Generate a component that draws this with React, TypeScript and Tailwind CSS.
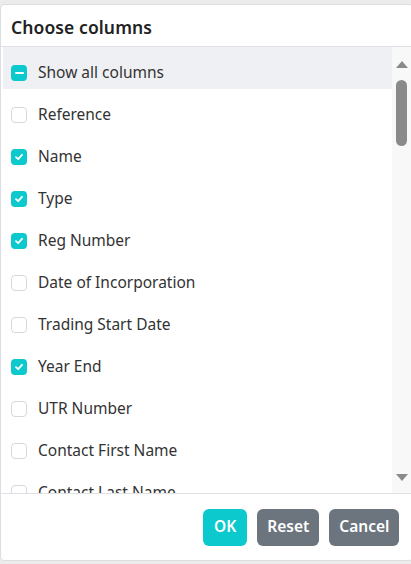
import React from "react";

const items: [string, boolean][] = [
  ["Reference", false],
  ["Name", true],
  ["Type", true],
  ["Reg Number", true],
  ["Date of Incorporation", false],
  ["Trading Start Date", false],
  ["Year End", true],
  ["UTR Number", false],
  ["Contact First Name", false],
  ["Contact Last Name", false],
];

function Box({ state }: { state: "on" | "off" | "mixed" }) {
  if (state === "off")
    return <div className="w-4 h-4 rounded-[4px] border border-[#d5d8dd] bg-white shrink-0" />;
  return (
    <div className="w-4 h-4 rounded-[4px] bg-[#0cc9cd] shrink-0 flex items-center justify-center">
      {state === "on" ? (
        <svg width="10" height="10" viewBox="0 0 10 10">
          <path d="M2 5.2 L4.2 7.2 L8 2.8" fill="none" stroke="white" strokeWidth="1.8" strokeLinecap="round" strokeLinejoin="round" />
        </svg>
      ) : (
        <div className="w-[9px] h-[2px] bg-white rounded" />
      )}
    </div>
  );
}

export default function App() {
  return (
    <div
      className="w-[411px] h-[564px] bg-[#ececec] pt-1 overflow-hidden"
      style={{ fontFamily: '"Noto Sans", "Open Sans", sans-serif' }}
    >
      <div className="h-[557px] w-[414px] bg-white border border-[#dcdde0] rounded-[4px] flex flex-col overflow-hidden">
        <div className="h-[42px] shrink-0 border-b border-[#dee2e6] flex items-center pl-[10px] pt-[3px]">
          <span className="text-[17.5px] font-semibold text-[#222] tracking-[0.1px]">Choose columns</span>
        </div>
        <div className="h-[446px] shrink-0 flex">
          <div className="w-[391px] pl-[2px] overflow-hidden">
            <div className="h-[42px] bg-[#eff0f4] flex items-center gap-[11px] pl-[8px] pt-[9px]">
              <Box state="mixed" />
              <span className="text-[15.5px] text-[#333]">Show all columns</span>
            </div>
            {items.map(([t, c]) => (
              <div key={t} className="h-[42px] flex items-center gap-[11px] pl-[8px] pt-[9px]">
                <Box state={c ? "on" : "off"} />
                <span className="text-[15.5px] text-[#333]">{t}</span>
              </div>
            ))}
          </div>
          <div className="w-[19px] bg-[#f8f8f8] flex flex-col items-center relative">
            <svg className="mt-[13px]" width="14" height="9" viewBox="0 0 14 9">
              <path d="M7 1 L13 8 L1 8 Z" fill="#8a8a8a" />
            </svg>
            <div className="mt-[11px] w-[11px] h-[66px] rounded-full bg-[#8a8a8a]" />
            <svg className="absolute bottom-[11px]" width="14" height="9" viewBox="0 0 14 9">
              <path d="M1 1 L13 1 L7 8 Z" fill="#8a8a8a" />
            </svg>
          </div>
        </div>
        <div className="flex-1 border-t border-[#dee2e6] flex items-center gap-[10px] pl-[202px]">
          <button className="h-[37px] px-[11px] rounded-[6px] bg-[#0cc9cd] text-white font-semibold text-[15.5px]">OK</button>
          <button className="h-[37px] px-[10px] rounded-[6px] bg-[#6c757d] text-white font-semibold text-[15.5px]">Reset</button>
          <button className="h-[37px] px-[10px] rounded-[6px] bg-[#6c757d] text-white font-semibold text-[15.5px]">Cancel</button>
        </div>
      </div>
    </div>
  );
}
